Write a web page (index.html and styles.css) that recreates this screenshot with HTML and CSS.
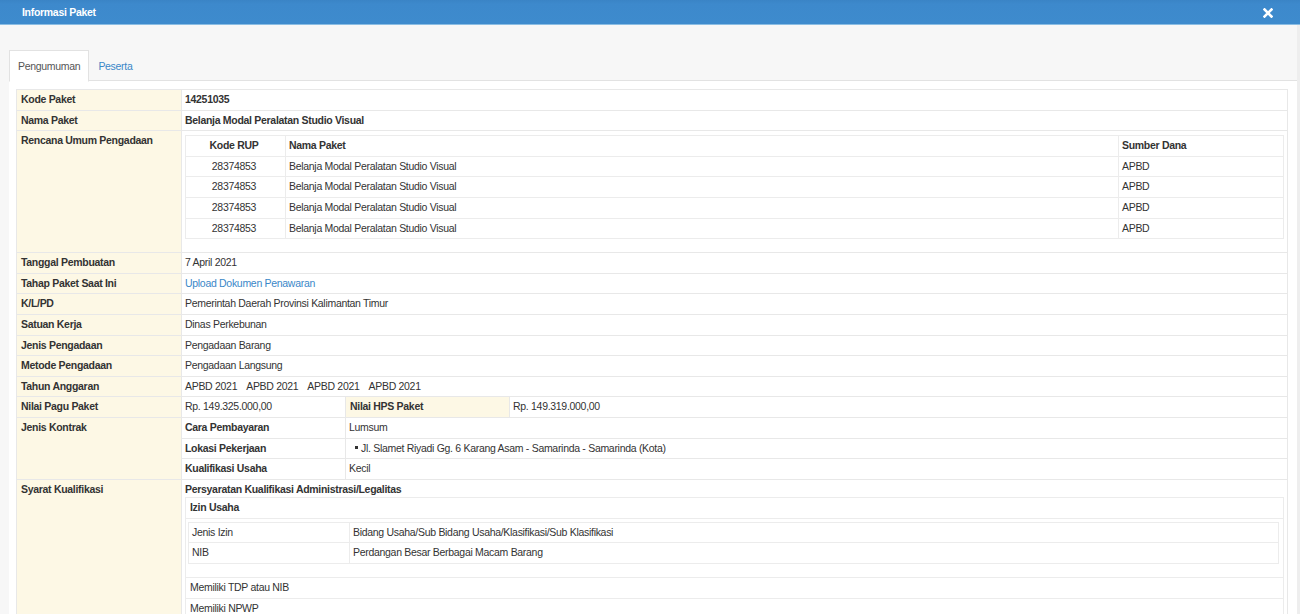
FILE: index.html
```html
<!DOCTYPE html>
<html>
<head>
<meta charset="utf-8">
<link rel="stylesheet" href="styles.css">
</head>
<body>
<div class="modal">
  <div class="modal-header">
    <span class="modal-title">Informasi Paket</span>
    <span class="close" aria-label="close">
      <svg width="10" height="10" viewBox="0 0 10 10"><path d="M1.5 1.5 L8.5 8.5 M8.5 1.5 L1.5 8.5" stroke="#fff" stroke-width="2.6" stroke-linecap="square"/></svg>
    </span>
  </div>
  <div class="modal-body">
    <ul class="tabs">
      <li class="tab active">Pengumuman</li>
      <li class="tab"><a href="#">Peserta</a></li>
    </ul>
    <div class="tab-panel">
      <table class="info">
        <colgroup><col class="c1"><col class="c2"><col class="c3"><col></colgroup>
        <tr><th>Kode Paket</th><td colspan="3" class="b">14251035</td></tr>
        <tr><th>Nama Paket</th><td colspan="3" class="b">Belanja Modal Peralatan Studio Visual</td></tr>
        <tr><th>Rencana Umum Pengadaan</th><td colspan="3" class="nest">
          <table class="rup">
            <tr><th class="kode">Kode RUP</th><th>Nama Paket</th><th class="sd">Sumber Dana</th></tr>
            <tr><td class="kode">28374853</td><td>Belanja Modal Peralatan Studio Visual</td><td>APBD</td></tr>
            <tr><td class="kode">28374853</td><td>Belanja Modal Peralatan Studio Visual</td><td>APBD</td></tr>
            <tr><td class="kode">28374853</td><td>Belanja Modal Peralatan Studio Visual</td><td>APBD</td></tr>
            <tr><td class="kode">28374853</td><td>Belanja Modal Peralatan Studio Visual</td><td>APBD</td></tr>
          </table>
        </td></tr>
        <tr><th>Tanggal Pembuatan</th><td colspan="3">7 April 2021</td></tr>
        <tr><th>Tahap Paket Saat Ini</th><td colspan="3"><a href="#">Upload Dokumen Penawaran</a></td></tr>
        <tr><th>K/L/PD</th><td colspan="3">Pemerintah Daerah Provinsi Kalimantan Timur</td></tr>
        <tr><th>Satuan Kerja</th><td colspan="3">Dinas Perkebunan</td></tr>
        <tr><th>Jenis Pengadaan</th><td colspan="3">Pengadaan Barang</td></tr>
        <tr><th>Metode Pengadaan</th><td colspan="3">Pengadaan Langsung</td></tr>
        <tr><th>Tahun Anggaran</th><td colspan="3"><span class="ta">APBD 2021</span><span class="ta">APBD 2021</span><span class="ta">APBD 2021</span><span class="ta">APBD 2021</span></td></tr>
        <tr><th>Nilai Pagu Paket</th><td>Rp. 149.325.000,00</td><th>Nilai HPS Paket</th><td>Rp. 149.319.000,00</td></tr>
        <tr><th rowspan="3">Jenis Kontrak</th><td class="b">Cara Pembayaran</td><td colspan="2">Lumsum</td></tr>
        <tr><td class="b">Lokasi Pekerjaan</td><td colspan="2"><span class="bullet"></span>Jl. Slamet Riyadi Gg. 6 Karang Asam - Samarinda - Samarinda (Kota)</td></tr>
        <tr><td class="b">Kualifikasi Usaha</td><td colspan="2">Kecil</td></tr>
        <tr><th>Syarat Kualifikasi</th><td colspan="3" class="nest syarat">
          <div class="b sub-title">Persyaratan Kualifikasi Administrasi/Legalitas</div>
          <table class="box">
            <tr><td class="b">Izin Usaha</td></tr>
            <tr><td class="nest-izin">
              <table class="izin">
                <colgroup><col class="iz1"><col></colgroup>
                <tr><td>Jenis Izin</td><td>Bidang Usaha/Sub Bidang Usaha/Klasifikasi/Sub Klasifikasi</td></tr>
                <tr><td>NIB</td><td>Perdangan Besar Berbagai Macam Barang</td></tr>
              </table>
            </td></tr>
            <tr><td>Memiliki TDP atau NIB</td></tr>
            <tr><td>Memiliki NPWP</td></tr>
          </table>
        </td></tr>
      </table>
    </div>
  </div>
</div>
</body>
</html>
```

FILE: styles.css
```css
html, body {
  margin: 0;
  padding: 0;
  height: 614px;
  overflow: hidden;
  background: #f7f7f7;
  font-family: "Liberation Sans", Arial, sans-serif;
  font-size: 10.5px;
  letter-spacing: -0.3px;
  color: #333;
}
.modal {
  display: flex;
  flex-direction: column;
  height: 614px;
}
.modal-header {
  height: 24px;
  flex: 0 0 24px;
  background: linear-gradient(#3a84c6 0, #3d89cc 4px, #3e8bcd 100%);
  border-bottom: 1px solid #8bbde3;
  display: flex;
  align-items: center;
  justify-content: space-between;
  padding: 0 27px 0 22px;
}
.modal-title {
  color: #fff;
  font-weight: bold;
}
.close {
  display: flex;
  align-items: center;
  margin-top: 2px;
}
.modal-body {
  flex: 1;
  padding: 25px 0 0 9px;
  border-right: 3px solid #eeeeee;
}
.tabs {
  list-style: none;
  margin: 0;
  padding: 0;
  display: flex;
  height: 30px;
  border-bottom: 1px solid #e2e2e2;
}
.tab {
  padding: 0 8px;
  line-height: 30px;
  color: #555;
  margin-bottom: -1px;
  border: 1px solid transparent;
  border-bottom: none;
}
.tab.active {
  background: #fff;
  border-color: #e2e2e2;
  border-bottom: 1px solid #fff;
  height: 30px;
}
.tab a, a {
  color: #3a87c8;
  text-decoration: none;
}
.tab-panel {
  background: #fff;
  padding: 8px 9px 0 7px;
  height: 600px;
}
table {
  border-collapse: collapse;
  width: 100%;
}
.info {
  table-layout: fixed;
  border: 1px solid #e6e6e6;
}
.c1 { width: 165px; }
.c2 { width: 164px; }
.c3 { width: 164px; }
.info th, .info td {
  border: 1px solid #e8e8e8;
  padding: 3px 3px;
  line-height: 13.6px;
  text-align: left;
  vertical-align: top;
  white-space: nowrap;
}
.info > tbody > tr > th {
  background: #fdf8e5;
  font-weight: bold;
  padding-left: 4px;
}
.b { font-weight: bold; }
.info td.nest {
  padding: 4px 3px 13px 3px;
}
.rup {
  table-layout: fixed;
  border: 1px solid #e6e6e6;
}
.rup th, .rup td {
  border: 1px solid #ececec;
  padding: 3px 3px;
  line-height: 13.6px;
  text-align: left;
  font-weight: normal;
  background: #fff;
}
.rup tr:first-child th { font-weight: bold; }
.rup .kode { width: 92px; text-align: center; padding-left: 2px; padding-right: 5px; }
.rup .sd { width: 158px; }
.ta { margin-right: 9px; }
.bullet {
  display: inline-block;
  width: 3px;
  height: 3px;
  background: #333;
  margin: 0 3px 2px 6px;
  vertical-align: middle;
}
.info td.syarat {
  padding: 3px 3px 0 3px;
}
.sub-title {
  line-height: 13.6px;
  padding: 0 0 1px 0;
}
.box {
  border: 1px solid #e6e6e6;
}
.box > tbody > tr > td {
  border: 1px solid #ececec;
  padding: 3px 4px;
  line-height: 13.6px;
}
.box > tbody > tr > td.nest-izin {
  padding: 3px 4px 13px 2px;
}
.izin {
  table-layout: fixed;
  border: 1px solid #e6e6e6;
}
.iz1 { width: 161px; }
.izin td {
  border: 1px solid #ececec;
  padding: 3px 3px;
  line-height: 13.6px;
}
```
